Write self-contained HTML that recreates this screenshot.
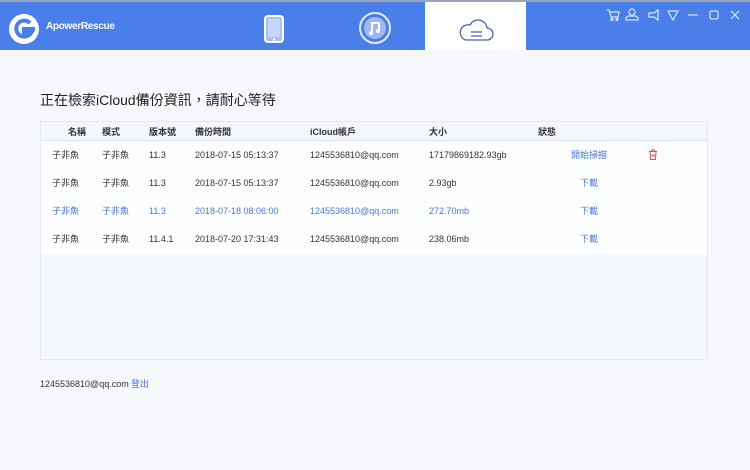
<!DOCTYPE html>
<html><head><meta charset="utf-8"><style>
*{margin:0;padding:0;box-sizing:border-box}
body{width:750px;height:470px;background:#f6f8fc;font-family:"Liberation Sans","Noto Sans CJK TC",sans-serif;position:relative;overflow:hidden;color:#333}
.top{position:absolute;left:0;top:0;width:750px;height:2px;background:#9aa6bb}
.hdr{position:absolute;left:0;top:2px;width:750px;height:48px;background:#4a7ee9}
.tab{position:absolute;left:425px;top:2px;width:101px;height:48px;background:#fff}
.abs{position:absolute}
.title{left:40px;top:91px;font-size:14px;color:#222;line-height:18px}
.box{position:absolute;left:40px;top:121px;width:668px;height:239px;border:1px solid #e3e8f0;background:#f3f6fb}
.th{position:absolute;left:0;top:0;width:666px;height:19px;background:#f3f6fb;border-bottom:1px solid #e3e8f0}
.rows{position:absolute;left:0;top:19px;width:666px;height:113px;background:#fdfeff}
.t{position:absolute;font-size:9px;line-height:12px;color:#333;white-space:nowrap}
.h{font-size:9px;font-weight:bold;color:#333}
.b{color:#4a78d6}
</style></head><body>
<div class="top"></div>
<div class="hdr"></div>
<div class="tab"></div>
<svg class="abs" style="left:8px;top:13px" width="32" height="32" viewBox="0 0 32 32"><circle cx="16" cy="16" r="15" fill="#fff"/><path d="M22 10a8 8 0 1 0 1 10h-7v-4h11" fill="none" stroke="#4a7ee9" stroke-width="4"/></svg>
<div class="abs" style="left:46px;top:21px;font-size:10px;font-weight:bold;color:#fff;letter-spacing:-0.3px">ApowerRescue</div>
<svg class="abs" style="left:263px;top:14px" width="22" height="30" viewBox="0 0 22 30"><rect x="2" y="2" width="18" height="26" rx="3" fill="#a9c1f5" stroke="#fff" stroke-width="2"/><rect x="5" y="5" width="12" height="18" fill="#c6d6f7"/><rect x="10" y="24.5" width="2" height="2" fill="#fff"/></svg>
<svg class="abs" style="left:358px;top:11px" width="34" height="34" viewBox="0 0 34 34"><circle cx="17" cy="17" r="15" fill="#4a7ee9" stroke="#e6eefc" stroke-width="2"/><circle cx="17" cy="17" r="11" fill="#9fb9f2"/><path d="M14 22V12h7v8" fill="none" stroke="#fff" stroke-width="2"/><circle cx="13" cy="22" r="2" fill="#fff"/><circle cx="20" cy="20" r="2" fill="#fff"/></svg>
<svg class="abs" style="left:457px;top:15px" width="38" height="28" viewBox="0 0 38 28"><path d="M9 25h21a6 6 0 0 0 0-12 9 9 0 0 0-17-3 7 7 0 0 0-4 15z" fill="none" stroke="#4c62a8" stroke-width="1.3"/><path d="M14 17h11M14 21h11" stroke="#4c62a8" stroke-width="1.3"/></svg>
<svg class="abs" style="left:606px;top:8px" width="140" height="14" viewBox="0 0 140 14" fill="none" stroke="#dbe5fb" stroke-width="1.2"><path d="M1 2h2l2 7h7l1-5H4"/><circle cx="6" cy="11.5" r="1"/><circle cx="11" cy="11.5" r="1"/><circle cx="26" cy="4" r="3"/><path d="M20 12h12v-2a4 4 0 0 0-4-2h-4a4 4 0 0 0-4 2z"/><path d="M43 5h5l4-3v10l-4-3h-5z"/><path d="M62 3h10l-5 9z"/><path d="M82 7h10"/><rect x="104" y="3" width="8" height="8" rx="1.5"/><path d="M125 3l8 8M133 3l-8 8"/></svg>
<div class="abs title">正在檢索iCloud備份資訊，請耐心等待</div>
<div class="box"><div class="th"></div><div class="rows"></div>
<div class="t h" style="left:27px;top:4px">名稱</div>
<div class="t h" style="left:61px;top:4px">模式</div>
<div class="t h" style="left:108px;top:4px">版本號</div>
<div class="t h" style="left:154px;top:4px">備份時間</div>
<div class="t h" style="left:269px;top:4px">iCloud帳戶</div>
<div class="t h" style="left:388px;top:4px">大小</div>
<div class="t h" style="left:497px;top:4px">狀態</div>
</div>
<div id="r"></div>
<script>
var d=[["11.3","2018-07-15 05:13:37","17179869182.93gb","開始掃描",0],["11.3","2018-07-15 05:13:37","2.93gb","下載",0],["11.3","2018-07-18 08:06:00","272.70mb","下載",1],["11.4.1","2018-07-20 17:31:43","238.06mb","下載",0]];
var h="";d.forEach(function(r,i){var y=149+i*28,c=r[4]?" b":"";
h+='<div class="t'+c+'" style="left:52px;top:'+y+'px">子非魚</div><div class="t'+c+'" style="left:102px;top:'+y+'px">子非魚</div><div class="t'+c+'" style="left:149px;top:'+y+'px">'+r[0]+'</div><div class="t'+c+'" style="left:195px;top:'+y+'px">'+r[1]+'</div><div class="t'+c+'" style="left:310px;top:'+y+'px">1245536810@qq.com</div><div class="t'+c+'" style="left:429px;top:'+y+'px">'+r[2]+'</div><div class="t b" style="left:'+(i?580:571)+'px;top:'+y+'px">'+r[3]+'</div>';});
document.getElementById("r").innerHTML=h;
</script>
<svg class="abs" style="left:648px;top:149px" width="10" height="11" viewBox="0 0 10 11" fill="none" stroke="#d9534f" stroke-width="1"><path d="M1 2.5h8M3.5 2.5V1h3v1.5M2 2.5l.5 8h5l.5-8M4 5v3M6 5v3"/></svg>
<div class="t" style="left:40px;top:378px">1245536810@qq.com</div>
<div class="t b" style="left:131px;top:378px">登出</div>
</body></html>
